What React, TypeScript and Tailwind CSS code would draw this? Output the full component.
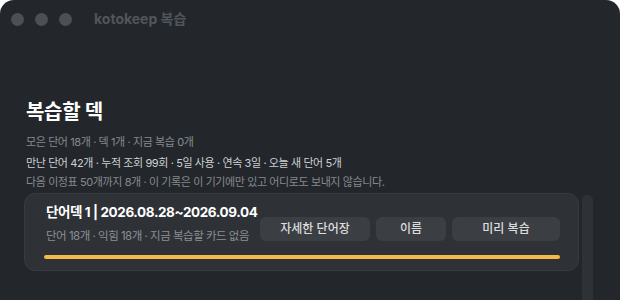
import React from 'react';

const font = { fontFamily: '"Inter", "Noto Sans CJK KR", sans-serif' };

function TrafficLights() {
    return (
        <div className="flex items-center gap-[11px]">
            <span className="w-[13px] h-[13px] rounded-full bg-[#4b5056]" />
            <span className="w-[13px] h-[13px] rounded-full bg-[#4b5056]" />
            <span className="w-[13px] h-[13px] rounded-full bg-[#4b5056]" />
        </div>
    );
}

function DeckCard() {
    return (
        <div className="rounded-[11px] bg-[#2e3236] border border-[#373b3f] pl-[19px] pr-[18px] pt-[8px] pb-[11px]">
            <div className="flex items-end justify-between">
                <div className="flex flex-col whitespace-nowrap min-w-0">
                    <div className="text-[13.5px] font-bold text-white leading-[20px] px-[2px] tracking-[-0.4px]">
                        단어덱 1 | 2026.08.28~2026.09.04
                    </div>
                    <div className="text-[11.5px] text-[#8b8f94] leading-[16px] mt-[6px] px-[2px] tracking-[-0.5px]">
                        단어 18개 · 익힘 18개 · 지금 복습할 카드 없음
                    </div>
                </div>
                <div className="flex gap-[6px] mb-[3px] shrink-0">
                    <button className="w-[110px] h-[24px] rounded-[6px] bg-[#3b3f44] text-[12px] font-medium text-[#dcdcdc]">
                        자세한 단어장
                    </button>
                    <button className="w-[70px] h-[24px] rounded-[6px] bg-[#3b3f44] text-[12px] font-medium text-[#dcdcdc]">
                        이름
                    </button>
                    <button className="w-[108px] h-[24px] rounded-[6px] bg-[#3b3f44] text-[12px] font-medium text-[#dcdcdc]">
                        미리 복습
                    </button>
                </div>
            </div>
            <div className="mt-[11px] h-[4px] rounded-full bg-[#f4b946]" />
        </div>
    );
}

export default function App() {
    return (
        <div className="w-[620px] h-[300px] bg-white overflow-hidden" style={font}>
            <div className="h-full bg-[#23272b] rounded-t-[14px] flex flex-col">
                {/* Title bar */}
                <div className="h-[38px] flex items-center pl-[11px] gap-[22px] shrink-0">
                    <TrafficLights />
                    <span className="text-[14px] font-bold text-[#51565c] mt-[-1px]">kotokeep 복습</span>
                </div>

                <div className="flex-1 flex pl-6 pr-[27px]">
                    <div className="flex-1 min-w-0 flex flex-col">
                        <h1 className="mt-[61px] ml-[2px] text-[20px] font-bold text-white leading-[26px] tracking-[-0.3px]">
                            복습할 덱
                        </h1>
                        <div className="mt-[9px] ml-[2px] text-[11px] text-[#868a8f] leading-[16px] tracking-[-0.4px]">
                            모은 단어 18개 · 덱 1개 · 지금 복습 0개
                        </div>
                        <div className="mt-[5px] ml-[2px] text-[11px] text-[#cdd0d3] leading-[16px] tracking-[-0.4px]">
                            만난 단어 42개 · 누적 조회 99회 · 5일 사용 · 연속 3일 · 오늘 새 단어 5개
                        </div>
                        <div className="mt-[3px] ml-[2px] text-[11px] text-[#868a8f] leading-[16px] tracking-[-0.4px]">
                            다음 이정표 50개까지 8개 · 이 기록은 이 기기에만 있고 어디로도 보내지 않습니다.
                        </div>
                        <div className="mt-[3px]">
                            <DeckCard />
                        </div>
                    </div>
                    <div className="w-[11px] shrink-0 ml-[3px] mt-[157px] rounded-t-[5px] bg-[#2e3236]" />
                </div>
            </div>
        </div>
    );
}
